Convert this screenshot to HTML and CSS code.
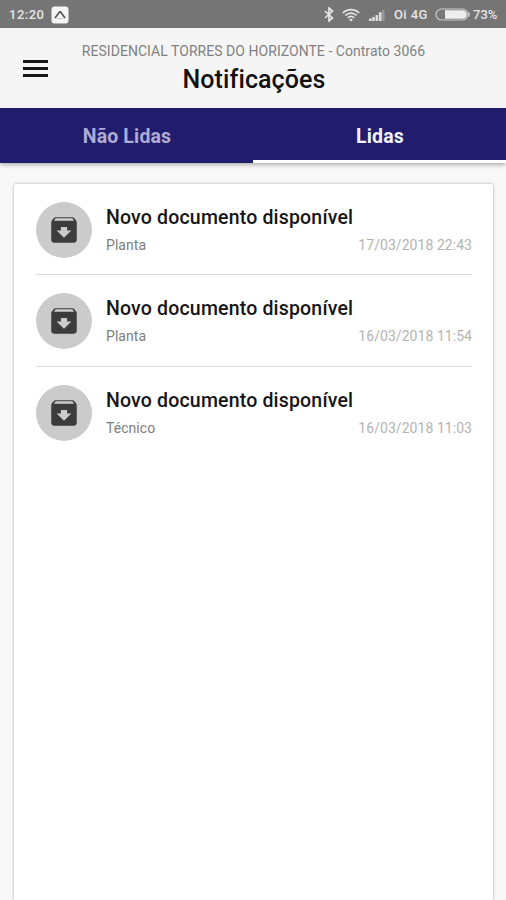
FILE: index.html
```html
<!DOCTYPE html>
<html lang="pt-BR">
<head>
    <meta charset="UTF-8">
    <meta name="viewport" content="width=device-width, initial-scale=1.0">
    <title>Notificações</title>
    <link rel="stylesheet" href="styles.css">
</head>
<body>
    <svg class="symbols" aria-hidden="true">
        <symbol id="icon-archive" viewBox="0 0 24 24">
            <path d="M20.54 5.23l-1.39-1.68C18.88 3.21 18.47 3 18 3H6c-.47 0-.88.21-1.16.55L3.46 5.23C3.17 5.57 3 6.02 3 6.5V19c0 1.1.9 2 2 2h14c1.1 0 2-.9 2-2V6.5c0-.48-.17-.93-.46-1.27z"/>
            <path class="cutout" d="M12 17.500L6.800 12.300H9.800V9.800h4.400v2.500h3L12 17.500zM4.900 5.400l1.200-1.700h11.800l1.200 1.700z"/>
        </symbol>
    </svg>
    <div class="status-bar">
        <span class="clock">12:20</span>
        <svg class="app-icon" width="18" height="18" viewBox="0 0 18 18">
            <rect x="0.5" y="0.5" width="17" height="17" rx="3" fill="#f4f4f4"/>
            <path d="M4 12L8.700 5.800h.8L14 12" fill="none" stroke="#555" stroke-width="1.700"/>
            <path d="M6 12.500h6" stroke="#c8c8c8" stroke-width="1"/>
        </svg>
        <div class="status-icons">
            <svg class="bluetooth" width="10" height="15" viewBox="0 0 10 15">
                <path d="M1 4l7.500 7L5 14V1l3.500 3L1 11" fill="none" stroke="#e6e6e6" stroke-width="1.700"/>
            </svg>
            <svg class="wifi" width="18" height="14" viewBox="0 0 18 14">
                <path d="M.8 5C5.300 .5 12.700 .5 17.200 5M3.300 7.500c3.300-3.100 8.100-3.100 11.400 0M5.800 9.900c1.900-1.700 4.500-1.700 6.400 0" fill="none" stroke="#e6e6e6" stroke-width="1.700"/>
                <path d="M7.100 11.400L9 13.500l1.900-2.100C9.800 10.500 8.200 10.500 7.100 11.400z" fill="#e6e6e6"/>
            </svg>
            <svg class="signal" width="16" height="12" viewBox="0 0 16 12">
                <path d="M0 9.500h2.700V12H0zM3.300 8h2.500v4H3.300zM6.600 6h2.500v6H6.600zM9.900 3.200h2.700V12H9.900z" fill="#dedede"/>
                <path d="M13.200 1h2.300v11h-2.300z" fill="#999"/>
            </svg>
            <span class="carrier">Oi 4G</span>
            <svg class="battery" width="35" height="13" viewBox="0 0 35 13">
                <rect x="1" y="1" width="32" height="11" rx="5.500" fill="#777" stroke="#ccc" stroke-width="1.200"/>
                <path d="M10 2.200h17.500a4.300 4.300 0 0 1 0 8.600H10z" fill="#ededed"/>
                <path d="M34 4.500v4" stroke="#ccc" stroke-width="1.500"/>
            </svg>
            <span class="percent">73%</span>
        </div>
    </div>
    <header class="header">
        <button class="menu-button" aria-label="Menu">
            <span></span>
            <span></span>
            <span></span>
        </button>
        <div class="header-text">
            <div class="subtitle">RESIDENCIAL TORRES DO HORIZONTE - Contrato 3066</div>
            <h1 class="title">Notificações</h1>
        </div>
    </header>
    <nav class="tabs">
        <a class="tab">Não Lidas</a>
        <a class="tab active">Lidas</a>
    </nav>
    <main class="card">
        <div class="item">
            <div class="avatar"><svg width="34" height="34"><use href="#icon-archive"/></svg></div>
            <div class="item-body">
                <h2 class="item-title">Novo documento disponível</h2>
                <div class="item-info">
                    <span class="type">Planta</span>
                    <span class="date">17/03/2018 22:43</span>
                </div>
            </div>
        </div>
        <div class="item">
            <div class="avatar"><svg width="34" height="34"><use href="#icon-archive"/></svg></div>
            <div class="item-body">
                <h2 class="item-title">Novo documento disponível</h2>
                <div class="item-info">
                    <span class="type">Planta</span>
                    <span class="date">16/03/2018 11:54</span>
                </div>
            </div>
        </div>
        <div class="item">
            <div class="avatar"><svg width="34" height="34"><use href="#icon-archive"/></svg></div>
            <div class="item-body">
                <h2 class="item-title">Novo documento disponível</h2>
                <div class="item-info">
                    <span class="type">Técnico</span>
                    <span class="date">16/03/2018 11:03</span>
                </div>
            </div>
        </div>
    </main>
</body>
</html>
```

FILE: styles.css
```css
* {
    box-sizing: border-box;
}
body {
    margin: 0;
    height: 100vh;
    display: flex;
    flex-direction: column;
    overflow: hidden;
    font-family: Roboto, "Liberation Sans", sans-serif;
    background-color: #f8f8f8;
}
.symbols {
    display: none;
}
.status-bar {
    flex: none;
    height: 28px;
    padding: 1px 8px 0 9px;
    display: flex;
    align-items: center;
    background-color: #757575;
    color: #e6e6e6;
    font-size: 13px;
    font-weight: 500;
}
.clock {
    width: 42px;
    letter-spacing: 0.5px;
}
.status-icons {
    margin-left: auto;
    display: flex;
    align-items: center;
}
.wifi {
    margin-left: 8px;
}
.signal {
    margin-left: 9px;
}
.carrier {
    margin-left: 9px;
    width: 41px;
    letter-spacing: 0.4px;
    white-space: nowrap;
}
.percent {
    width: 25px;
    margin-left: 3px;
}
.header {
    flex: none;
    height: 79.5px;
    position: relative;
    display: flex;
    justify-content: center;
    background-color: #f5f5f5;
}
.menu-button {
    position: absolute;
    left: 23px;
    top: 32px;
    width: 25px;
    padding: 0;
    border: none;
    background: none;
    display: flex;
    flex-direction: column;
    gap: 4.4px;
}
.menu-button span {
    height: 2.6px;
    background-color: #161616;
}
.header-text {
    padding: 15px 0 0 1px;
    text-align: center;
}
.subtitle {
    font-size: 14px;
    line-height: 16px;
    letter-spacing: 0.04px;
    color: #818181;
}
.title {
    margin: 7px 0 0 1px;
    font-size: 25px;
    line-height: 28px;
    font-weight: 500;
    letter-spacing: 0.1px;
    color: #111;
}
.tabs {
    flex: none;
    height: 55.5px;
    display: flex;
    background-color: #221c6f;
    box-shadow: 0 1px 5px rgba(0, 0, 0, 0.4);
}
.tab {
    flex: 1;
    padding: 5px 0 0 1px;
    display: flex;
    align-items: center;
    justify-content: center;
    font-size: 19.5px;
    font-weight: 700;
    letter-spacing: 0.15px;
    color: #aeacd2;
    border-bottom: 3px solid transparent;
}
.tab.active {
    color: #f1f1fb;
    border-bottom-color: #fff;
}
.card {
    flex: 1;
    margin: 21px 13px 0 14px;
    padding: 0 21px 0 22px;
    background-color: #fff;
    border-radius: 2px 2px 0 0;
    box-shadow: 0 0 3px rgba(0, 0, 0, 0.35);
}
.item {
    height: 91.4px;
    padding-top: 18px;
    display: flex;
    border-bottom: 1px solid #dcdcdc;
}
.item:last-child {
    border-bottom: none;
}
.avatar {
    flex: none;
    width: 56px;
    height: 56px;
    margin-right: 14px;
    border-radius: 50%;
    background-color: #cbcbcb;
    display: flex;
    align-items: center;
    justify-content: center;
}
.avatar svg {
    fill: #3c3c3c;
}
.cutout {
    fill: #cbcbcb;
}
.item-body {
    flex: 1;
    padding-top: 3px;
}
.item-title {
    margin: 0;
    font-size: 19.5px;
    line-height: 26px;
    font-weight: 500;
    letter-spacing: 0.18px;
    color: #161616;
}
.item-info {
    margin-top: 6px;
    display: flex;
    justify-content: space-between;
    font-size: 14px;
    line-height: 16px;
    letter-spacing: 0.05px;
    color: #7d7d7d;
}
.date {
    color: #b3b3b3;
}
```
